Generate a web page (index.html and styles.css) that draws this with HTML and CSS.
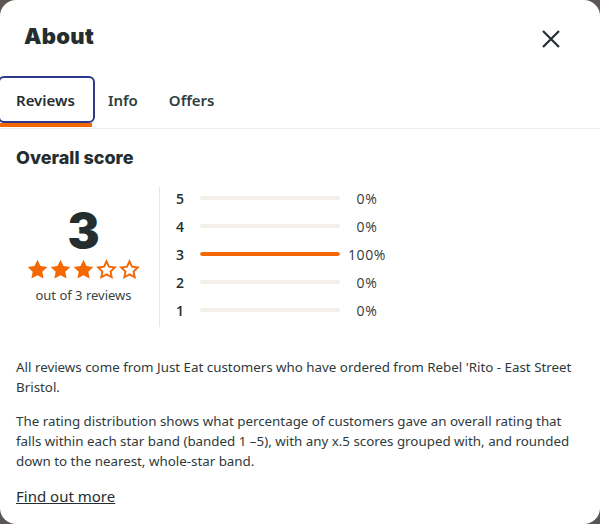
FILE: index.html
```html
<!DOCTYPE html>
<html lang="en">
<head>
<meta charset="utf-8">
<title>About</title>
<link rel="stylesheet" href="styles.css">
</head>
<body>
<div class="modal">
  <header class="modal-header">
    <h1 class="title">About</h1>
    <button class="close" aria-label="Close">
      <svg width="20" height="20" viewBox="0 0 20 20"><path d="M2 2 L18 18 M18 2 L2 18" stroke="#242e30" stroke-width="2.2" fill="none"/></svg>
    </button>
  </header>
  <nav class="tabs">
    <div class="tab active">Reviews</div>
    <div class="tab">Info</div>
    <div class="tab">Offers</div>
  </nav>
  <section class="content">
    <h2 class="subtitle">Overall score</h2>
    <div class="score">
      <div class="summary">
        <div class="big">3</div>
        <div class="stars">
          <svg viewBox="0 0 24 24"><path class="full" d="M12 1.8l3.1 6.6 7.2.9-5.3 5 1.4 7.1L12 17.9l-6.4 3.5 1.4-7.1-5.3-5 7.2-.9z"/></svg>
          <svg viewBox="0 0 24 24"><path class="full" d="M12 1.8l3.1 6.6 7.2.9-5.3 5 1.4 7.1L12 17.9l-6.4 3.5 1.4-7.1-5.3-5 7.2-.9z"/></svg>
          <svg viewBox="0 0 24 24"><path class="full" d="M12 1.8l3.1 6.6 7.2.9-5.3 5 1.4 7.1L12 17.9l-6.4 3.5 1.4-7.1-5.3-5 7.2-.9z"/></svg>
          <svg viewBox="0 0 24 24"><path class="empty" d="M12 3.5l2.6 5.6 6.1.8-4.5 4.2 1.2 6-5.4-3-5.4 3 1.2-6-4.5-4.2 6.1-.8z"/></svg>
          <svg viewBox="0 0 24 24"><path class="empty" d="M12 3.5l2.6 5.6 6.1.8-4.5 4.2 1.2 6-5.4-3-5.4 3 1.2-6-4.5-4.2 6.1-.8z"/></svg>
        </div>
        <div class="count">out of 3 reviews</div>
      </div>
      <div class="dist">
        <div class="row"><span class="lbl">5</span><span class="bar"><span class="fill" style="width:0%"></span></span><span class="pct">0%</span></div>
        <div class="row"><span class="lbl">4</span><span class="bar"><span class="fill" style="width:0%"></span></span><span class="pct">0%</span></div>
        <div class="row"><span class="lbl">3</span><span class="bar"><span class="fill" style="width:100%"></span></span><span class="pct">100%</span></div>
        <div class="row"><span class="lbl">2</span><span class="bar"><span class="fill" style="width:0%"></span></span><span class="pct">0%</span></div>
        <div class="row"><span class="lbl">1</span><span class="bar"><span class="fill" style="width:0%"></span></span><span class="pct">0%</span></div>
      </div>
    </div>
    <p class="text">All reviews come from Just Eat customers who have ordered from Rebel 'Rito - East Street Bristol.</p>
    <p class="text">The rating distribution shows what percentage of customers gave an overall rating that falls within each star band (banded 1 –5), with any x.5 scores grouped with, and rounded down to the nearest, whole-star band.</p>
    <a class="more" href="#">Find out more</a>
  </section>
</div>
</body>
</html>
```
FILE: styles.css
```css
* { box-sizing: border-box; }
html, body { margin: 0; padding: 0; }
body {
  background: #5b5553;
  width: 600px;
  height: 524px;
  overflow: hidden;
  font-family: "Noto Sans", "Liberation Sans", sans-serif;
  color: #242e30;
}
.modal {
  width: 600px;
  height: 524px;
  background: #fff;
  border-radius: 16px;
  overflow: hidden;
}
.modal-header {
  display: flex;
  justify-content: space-between;
  align-items: flex-start;
  padding: 22px 39px 0 24px;
  height: 76px;
}
.title {
  margin: 0;
  font-family: "Inter", sans-serif;
  font-weight: 900;
  font-size: 22px;
  line-height: 28px;
  letter-spacing: 0.3px;
}
.close {
  border: 0;
  background: none;
  padding: 0;
  margin-top: 7px;
  width: 20px;
  height: 20px;
  cursor: pointer;
}
.tabs {
  display: flex;
  border-bottom: 1px solid #ececec;
  height: 53px;
}
.tab {
  font-family: "Noto Sans", sans-serif;
  font-weight: 600;
  font-size: 15px;
  padding: 0 16px;
  height: 47px;
  display: flex;
  align-items: center;
  color: #2d3e40;
  position: relative;
}
.tab.active {
  border: 2px solid #2d3a8c;
  border-radius: 6px;
  margin-left: -2px;
  padding: 0 18px 0 16px;
  color: #242e30;
}
.tab.active::after {
  content: "";
  position: absolute;
  left: 0;
  right: 1px;
  bottom: -6px;
  height: 4px;
  background: #f36805;
}
.tab + .tab { padding-left: 13px; padding-right: 18px; }
.content {
  padding: 18px 16px 0 16px;
}
.subtitle {
  margin: 0;
  font-family: "Inter", sans-serif;
  font-weight: 800;
  font-size: 18px;
  line-height: 22px;
}
.score {
  display: flex;
  margin-top: 18px;
  height: 140px;
}
.summary {
  width: 144px;
  padding-right: 8px;
  display: flex;
  flex-direction: column;
  align-items: center;
  padding-top: 19px;
  border-right: 1px solid #e6e6e6;
}
.big {
  font-family: "Inter", sans-serif;
  font-weight: 900;
  font-size: 48px;
  line-height: 50px;
}
.stars {
  display: flex;
  margin-top: 2px;
}
.stars svg { width: 23px; height: 23px; }
.full { fill: #f36805; }
.empty { fill: none; stroke: #f36805; stroke-width: 2; stroke-linejoin: miter; }
.count {
  font-size: 13px;
  line-height: 18px;
  margin-top: 5px;
  color: #3a4446;
}
.dist {
  padding: 0 0 0 16px;
  margin-top: -3px;
}
.row {
  display: flex;
  align-items: center;
  height: 28px;
}
.lbl {
  width: 24px;
  font-family: "Open Sans", sans-serif;
  font-weight: 600;
  font-size: 14px;
}
.bar {
  width: 140px;
  height: 4px;
  border-radius: 2px;
  background: #f3f0ea;
  overflow: hidden;
  display: block;
}
.fill { display: block; height: 100%; background: #f36805; border-radius: 2px; }
.pct {
  width: 54px;
  text-align: center;
  font-family: "Open Sans", sans-serif;
  font-size: 14px;
  letter-spacing: 0.6px;
  color: #2f3a3c;
}
.text {
  margin: 30px 0 0 0;
  font-size: 13.35px;
  line-height: 20px;
  color: #2f3a3c;
}
.text + .text { margin-top: 14px; }
.more {
  display: inline-block;
  margin-top: 15px;
  font-size: 15px;
  line-height: 20px;
  color: #242e30;
  text-decoration: underline;
}
```
